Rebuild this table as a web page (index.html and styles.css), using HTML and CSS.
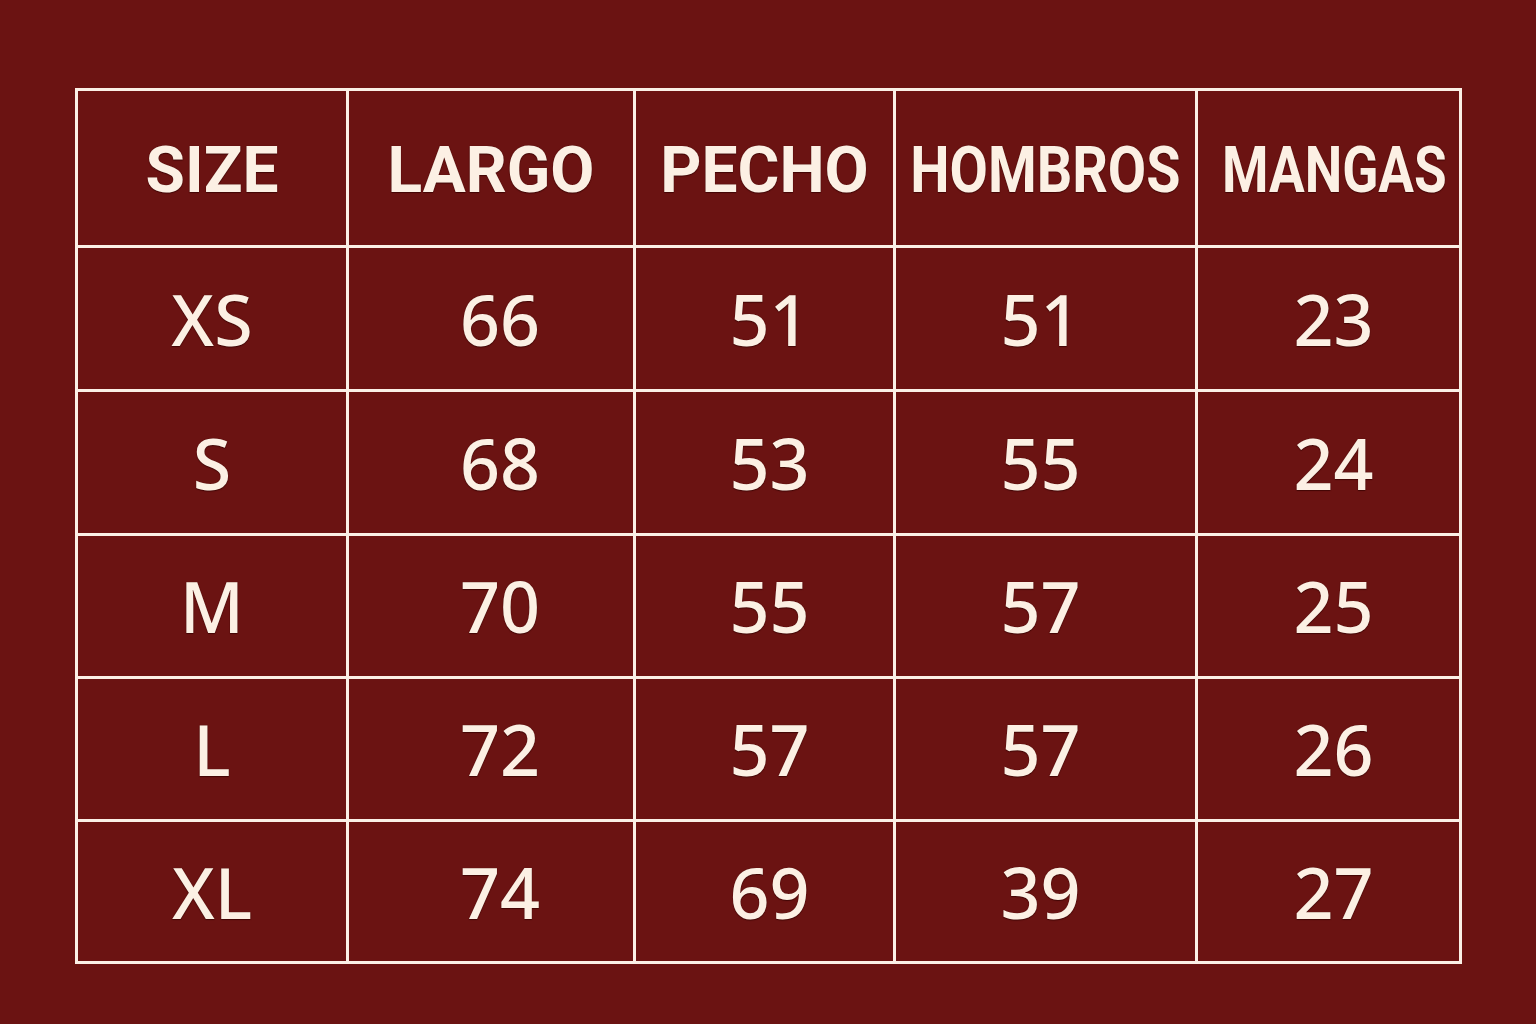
FILE: index.html
```html
<!DOCTYPE html>
<html lang="es">
<head>
<meta charset="utf-8">
<title>Size chart</title>
<link rel="stylesheet" href="styles.css">
</head>
<body>
<main class="page">
  <div class="chart">
    <div class="cell head"><span>SIZE</span></div>
    <div class="cell head"><span>LARGO</span></div>
    <div class="cell head"><span>PECHO</span></div>
    <div class="cell head"><span class="narrow">HOMBROS</span></div>
    <div class="cell head"><span class="narrower">MANGAS</span></div>

    <div class="cell">XS</div><div class="cell">66</div><div class="cell">51</div><div class="cell">51</div><div class="cell">23</div>
    <div class="cell">S</div><div class="cell">68</div><div class="cell">53</div><div class="cell">55</div><div class="cell">24</div>
    <div class="cell">M</div><div class="cell">70</div><div class="cell">55</div><div class="cell">57</div><div class="cell">25</div>
    <div class="cell">L</div><div class="cell">72</div><div class="cell">57</div><div class="cell">57</div><div class="cell">26</div>
    <div class="cell">XL</div><div class="cell">74</div><div class="cell">69</div><div class="cell">39</div><div class="cell">27</div>
  </div>
</main>
</body>
</html>
```

FILE: styles.css
```css
html, body {
  margin: 0;
  padding: 0;
  background: #6b1312;
}

.page {
  width: 1536px;
  height: 1024px;
  box-sizing: border-box;
  padding: 88px 0 0 75px;
  background: #6b1312;
}

.chart {
  display: grid;
  width: 1387px;
  box-sizing: border-box;
  grid-template-columns: 268px 284px 257px 299px 261px;
  grid-template-rows: 154px 141px 141px 140px 140px 139px;
  gap: 3px;
  border: 3px solid #fbf0e6;
  background: #fbf0e6;
}

.cell {
  background: #6b1312;
  display: flex;
  align-items: center;
  justify-content: center;
  color: #fcf0e4;
  font-family: "Noto Sans", "Open Sans", sans-serif;
  font-weight: 500;
  font-size: 70px;
  line-height: 1;
  text-shadow: 0 1px 1px rgba(50, 0, 0, 0.7), 0 0 1px rgba(50, 0, 0, 0.6);
  padding-top: 0;
  box-sizing: border-box;
}

.cell:nth-child(5n+2) { padding-left: 18px; }
.cell:nth-child(5n+3) { padding-left: 10px; }
.cell:nth-child(5n+4) { padding-right: 10px; }
.cell:nth-child(5n) { padding-left: 10px; }

.cell.head {
  font-family: Roboto, "Noto Sans", sans-serif;
  font-weight: 700;
  font-size: 64px;
  padding: 6px 0 0 0;
}

.head span {
  display: inline-block;
}

.head .narrow {
  transform: scaleX(0.87);
}

.head .narrower {
  transform: scaleX(0.83);
  margin-left: 12px;
}
```
